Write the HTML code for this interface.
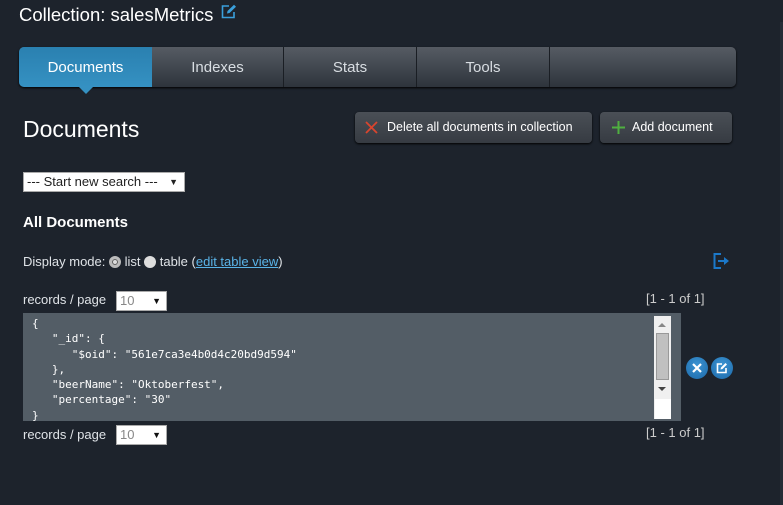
<!DOCTYPE html>
<html><head><style>
*{margin:0;padding:0;box-sizing:border-box}
body{width:783px;height:505px;background:#1d232c;font-family:"Liberation Sans",sans-serif;color:#fff;position:relative;overflow:hidden}
.a{position:absolute}
.rb{position:absolute;left:780px;top:22px;width:3px;height:483px;background:#252c36}
.tabs{left:19px;top:47px;width:717px;height:40px;border-radius:5px;background:linear-gradient(#565b63,#2e343c);box-shadow:0 1px 2px #000}
.tab{position:absolute;top:0;height:40px;line-height:42px;text-align:center;font-size:15px;color:#d8dde2;border-right:1px solid #1a1e24}
.act{background:linear-gradient(#2a80b0,#3591c2);color:#fff;border-radius:5px 0 0 5px;border-right:none}
.btn{position:absolute;top:112px;height:31px;border-radius:4px;background:linear-gradient(#4a4f56,#363b42);box-shadow:0 1px 2px #000;font-size:12.5px;line-height:31px;color:#fff}
.sel{position:absolute;background:#fff;border:1px solid #aaa;color:#222;font-size:13px;height:20px;line-height:18px;padding-left:3px}
.sm{font-size:13px;color:#dfe3e7}
.code{left:23px;top:313px;width:658px;height:108px;background:#535d66;font-family:"DejaVu Sans Mono","Liberation Mono",monospace;font-size:11px;line-height:15.3px;color:#fff;padding:3px 0 0 9px;white-space:pre;overflow:hidden}
.circ{position:absolute;top:357px;width:22px;height:22px;border-radius:50%;background:radial-gradient(circle at 50% 35%,#3b93d2,#1d6aaa)}
</style></head><body>
<div class="rb"></div>
<div class="a" style="left:19px;top:4px;font-size:18.5px;color:#fff">Collection: salesMetrics</div>
<svg class="a" style="left:221px;top:4px" width="16" height="15" viewBox="0 0 16 15"><path d="M8 2H1.5V13.5H13V8" fill="none" stroke="#3aa0dc" stroke-width="1.6"/><path d="M6 9.5L6.5 7L13 0.8L15 2.8L8.5 9Z" fill="#3aa0dc"/></svg>
<div class="a tabs">
<div class="tab act" style="left:0;width:133px">Documents</div>
<div class="tab" style="left:133px;width:132px">Indexes</div>
<div class="tab" style="left:265px;width:133px">Stats</div>
<div class="tab" style="left:398px;width:133px">Tools</div>
</div>
<div class="a" style="left:79px;top:87px;width:0;height:0;border-left:7px solid transparent;border-right:7px solid transparent;border-top:7px solid #3591c2"></div>
<div class="a" style="left:23px;top:116px;font-size:23px;color:#fff">Documents</div>
<div class="btn" style="left:355px;width:237px"><svg class="a" style="left:10px;top:9px" width="13" height="13"><path d="M1 1L12 12M12 1L1 12" stroke="#d9452e" stroke-width="1.8"/></svg><span class="a" style="left:32px">Delete all documents in collection</span></div>
<div class="btn" style="left:600px;width:132px"><svg class="a" style="left:12px;top:9px" width="13" height="13"><path d="M6.5 0V13M0 6.5H13" stroke="#4fb040" stroke-width="2"/></svg><span class="a" style="left:32px">Add document</span></div>
<div class="sel" style="left:23px;top:172px;width:162px">--- Start new search --- <span style="position:absolute;right:6px;font-size:9px">▼</span></div>
<div class="a" style="left:23px;top:214px;font-size:15px;font-weight:bold;color:#fff">All Documents</div>
<div class="a sm" style="left:23px;top:254px">Display mode: <span style="display:inline-block;width:12px;height:12px;border-radius:50%;background:#ddd;border:3px solid #bbb;box-shadow:inset 0 0 0 1px #555;vertical-align:-2px"></span> list <span style="display:inline-block;width:12px;height:12px;border-radius:50%;background:#ddd;vertical-align:-2px"></span> table (<span style="color:#5ab4e8;text-decoration:underline">edit table view</span>)</div>
<svg class="a" style="left:713px;top:253px" width="18" height="16"><path d="M8 1H1.5V15H8" fill="none" stroke="#1b78c9" stroke-width="2"/><path d="M5 7H11V4L16 8L11 12V9H5Z" fill="#1b78c9"/></svg>
<div class="a sm" style="left:23px;top:292px">records / page</div>
<div class="sel" style="left:116px;top:291px;width:51px;color:#888">10<span style="position:absolute;right:5px;font-size:9px;color:#111">▼</span></div>
<div class="a sm" style="left:646px;top:291px;color:#ccc">[1 - 1 of 1]</div>
<div class="a code">{
   "_id": {
      "$oid": "561e7ca3e4b0d4c20bd9d594"
   },
   "beerName": "Oktoberfest",
   "percentage": "30"
}</div>
<div class="a" style="left:654px;top:316px;width:17px;height:103px;background:#f0f0f0"></div>
<div class="a" style="left:656px;top:333px;width:13px;height:47px;background:#c0c0c0;border:1px solid #999"></div>
<div class="a" style="left:658px;top:323px;border-left:4px solid transparent;border-right:4px solid transparent;border-bottom:4px solid #888"></div>
<div class="a" style="left:658px;top:387px;border-left:4px solid transparent;border-right:4px solid transparent;border-top:4px solid #444"></div>
<div class="a" style="left:655px;top:399px;width:16px;height:20px;background:#fff"></div>
<div class="circ" style="left:686px"><svg class="a" style="left:6px;top:6px" width="10" height="10"><path d="M1 1L9 9M9 1L1 9" stroke="#fff" stroke-width="2.2"/></svg></div>
<div class="circ" style="left:711px"><svg class="a" style="left:5px;top:5px" width="12" height="12"><path d="M6 2H1.5V10.5H10V6" fill="none" stroke="#fff" stroke-width="1.6"/><path d="M4.5 7.5L5 5.5L9.5 1L11 2.5L6.5 7Z" fill="#fff"/></svg></div>
<div class="a sm" style="left:23px;top:427px">records / page</div>
<div class="sel" style="left:116px;top:425px;width:51px;color:#888">10<span style="position:absolute;right:5px;font-size:9px;color:#111">▼</span></div>
<div class="a sm" style="left:646px;top:425px;color:#ccc">[1 - 1 of 1]</div>
</body></html>
